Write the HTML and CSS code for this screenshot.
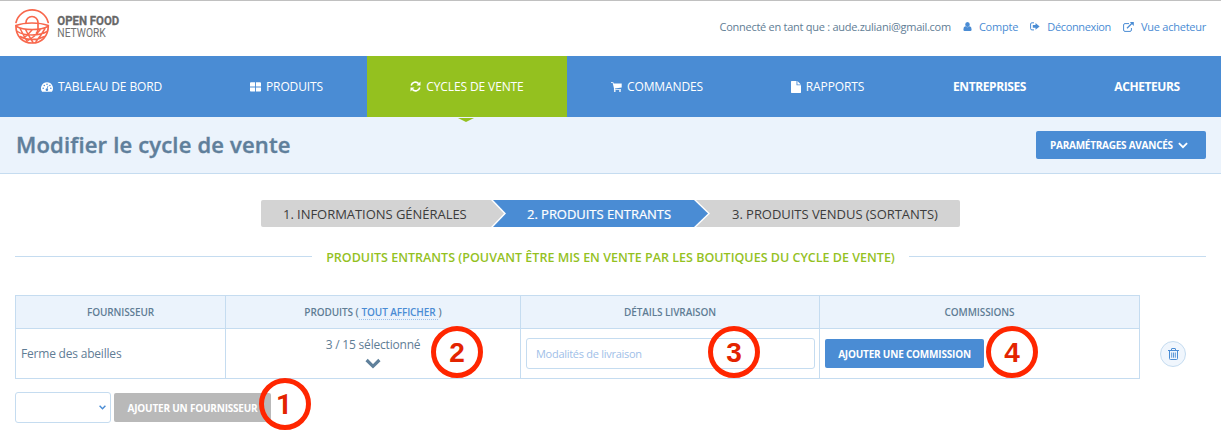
FILE: index.html
```html
<!DOCTYPE html>
<html lang="fr">
<head>
<meta charset="utf-8">
<title>Modifier le cycle de vente</title>
<link rel="stylesheet" href="styles.css">
</head>
<body>
<header class="top">
  <svg class="logo" width="120" height="40" viewBox="0 0 120 40">
    <g fill="none" stroke="#f8684d" stroke-width="1.500" stroke-linecap="round">
      <path d="M1 14.500A16.600 16.600 0 0 1 33.200 14.500" stroke-width="1.700"/>
      <path d="M.9 17.500C7 15.200 12 15 17 15S27 15.200 33.300 17.500C33.300 29 26 35 17.200 35C8 35 .9 29 .9 17.500Z" stroke-width="1.700"/>
      <path d="M11 15V14.500A6 6 0 0 1 23 14.500V21.500Q23 23.500 21.500 25" stroke-width="1.700"/>
      <path d="M1.500 18.500C8 22.500 26 22.500 32.800 18.500M2.500 23.500C9 28 25 28 32 23.500M5 28.500C12 32.500 22 32.500 29.500 28.500M5 20.500L8 26L12 33.500M10.500 21.500L14 28L18 34.500M30 20.500L26 27L21 33.500M25 22L19.500 28L13 32.500M17 22L12 27.500L8 30"/>
    </g>
    <text x="42.300" y="17" class="logo-bold" textLength="62" lengthAdjust="spacingAndGlyphs">OPEN FOOD</text>
    <text x="42.300" y="28.500" class="logo-light" textLength="48.500" lengthAdjust="spacingAndGlyphs">NETWORK</text>
  </svg>
  <div class="account">
    <span class="who">Connecté en tant que : aude.zuliani@gmail.com</span>
    <a class="acc"><svg width="9" height="9" viewBox="0 0 9 9"><path d="M4.500 0A2.300 2.500 0 0 1 4.500 5A2.300 2.500 0 0 1 4.500 0M2.200 4.200Q4.500 6.300 6.800 4.200Q8.600 4.600 8.600 7.500Q8.600 9 7.400 9H1.600Q.4 9 .4 7.500Q.4 4.600 2.200 4.200" fill="#4a8cd4"/></svg><span class="t-compte">Compte</span></a>
    <a class="acc"><svg width="10" height="9" viewBox="0 0 10 9"><path d="M4 .8H2Q.6 .8 .6 2V6.600Q.6 7.900 2 7.900H4" fill="none" stroke="#4a8cd4"/><path d="M2.800 3H5.500V1L9.600 4.400L5.500 7.800V5.800H2.800Z" fill="#4a8cd4"/></svg><span class="t-deco">Déconnexion</span></a>
    <a class="acc"><svg width="11" height="10" viewBox="0 0 11 10"><path d="M6 1.600H2Q.6 1.600 .6 3V8Q.6 9.400 2 9.400H7Q8.400 9.400 8.400 8V6" fill="none" stroke="#4a8cd4"/><path d="M4 6.300L9 1.300" stroke="#4a8cd4" stroke-width="1.300"/><path d="M6.800 0H10.800V4Z" fill="#4a8cd4"/></svg><span class="t-vue">Vue acheteur</span></a>
  </div>
</header>
<nav class="nav">
  <a class="tab w1"><svg width="12" height="10" viewBox="0 0 12 10"><path d="M6 .3A6 6 0 0 0 1.100 9.700H10.900A6 6 0 0 0 6 .3" fill="#fff"/><g fill="#4a8cd4"><circle cx="2.200" cy="6.200" r=".8"/><circle cx="3.300" cy="3.500" r=".8"/><circle cx="6" cy="2.300" r=".8"/><circle cx="9.800" cy="6.200" r=".8"/><circle cx="8.900" cy="3.500" r=".8"/><circle cx="5.900" cy="7.700" r="1.300"/></g><path d="M5.900 7.500L7 3.800" stroke="#4a8cd4" stroke-width=".8"/></svg><span>TABLEAU DE BORD</span></a>
  <a class="tab w2"><svg width="11" height="10" viewBox="0 0 11 10"><path d="M.6 .3H5.100V4.500H0V.9ZM6 .3H10.400L11 .9V4.500H6ZM0 5.400H5.100V9.600H.6L0 9ZM6 5.400H11V9L10.400 9.600H6Z" fill="#fff"/></svg><span>PRODUITS</span></a>
  <a class="tab w3 active"><svg width="11" height="11" viewBox="0 0 11 11"><path d="M1.200 4.500A4.300 4.300 0 0 1 8.600 2.600M9.800 6.500A4.300 4.300 0 0 1 2.400 8.400" fill="none" stroke="#fff" stroke-width="1.600"/><path d="M10.500 .6V4.600H6.500ZM.5 10.400V6.400H4.500Z" fill="#fff"/></svg><span>CYCLES DE VENTE</span></a>
  <a class="tab w4"><svg width="11" height="10" viewBox="0 0 11 10"><path d="M0 .2H2.300L2.700 1.500H10.700V5.600L3.900 6.400V7.200H10V8H2.900L3 6.400L1.700 1.100H0Z" fill="#fff"/><circle cx="3.800" cy="9" r=".9" fill="#fff"/><circle cx="9" cy="9" r=".9" fill="#fff"/></svg><span>COMMANDES</span></a>
  <a class="tab w5"><svg width="10" height="12" viewBox="0 0 10 12"><path d="M.5 0H5.500V4.300H10V11.500L9.500 12H.5L0 11.500V.5ZM6.400 .1L9.900 3.500H6.400Z" fill="#fff"/></svg><span>RAPPORTS</span></a>
  <a class="tab w6 bold"><span>ENTREPRISES</span></a>
  <a class="tab w7 bold"><span>ACHETEURS</span></a>
</nav>
<section class="titlebar">
  <h1>Modifier le cycle de vente</h1>
  <button class="btn advanced"><span>PARAMÉTRAGES AVANCÉS</span><svg width="10" height="7" viewBox="0 0 10 7"><path d="M.9 1.200L5 5.200L9.100 1.200" fill="none" stroke="#fff" stroke-width="1.800"/></svg></button>
</section>
<main>
  <div class="steps">
    <div class="step s1"><span>1. INFORMATIONS GÉNÉRALES</span></div>
    <div class="step s2"><span>2. PRODUITS ENTRANTS</span></div>
    <div class="step s3"><span>3. PRODUITS VENDUS (SORTANTS)</span></div>
  </div>
  <div class="legend"><i></i><h2>PRODUITS ENTRANTS (POUVANT ÊTRE MIS EN VENTE PAR LES BOUTIQUES DU CYCLE DE VENTE)</h2><i></i></div>
  <div class="tablerow">
    <div class="grid">
      <div class="th">FOURNISSEUR</div>
      <div class="th"><span>PRODUITS (<a class="all">TOUT AFFICHER</a>)</span></div>
      <div class="th">DÉTAILS LIVRAISON</div>
      <div class="th">COMMISSIONS</div>
      <div class="td name">Ferme des abeilles</div>
      <div class="td products"><span>3 / 15 sélectionné</span><svg width="16" height="11" viewBox="0 0 16 11"><path d="M1.600 2L8 8.300L14.400 2" fill="none" stroke="#5f809b" stroke-width="3.200"/></svg></div>
      <div class="td"><input placeholder="Modalités de livraison"></div>
      <div class="td"><button class="btn commission">AJOUTER UNE COMMISSION</button></div>
    </div>
    <a class="trash"><svg width="11" height="12" viewBox="0 0 11 12"><g fill="none" stroke="#4a8cd4"><path d="M0 2.500H11M3.500 2.500V.9Q3.500 .5 4 .5H7Q7.500 .5 7.500 .9V2.500M1.500 2.500V10.500Q1.500 11.500 2.500 11.500H8.500Q9.500 11.500 9.500 10.500V2.500"/><path d="M3.700 4.500V9.700M5.500 4.500V9.700M7.300 4.500V9.700" stroke-width=".9"/></g></svg></a>
  </div>
  <div class="add">
    <div class="select"><svg width="7" height="5" viewBox="0 0 7 5"><path d="M.6 .7L3.500 3.700L6.400 .7" fill="none" stroke="#4a8cd4" stroke-width="1.400"/></svg></div>
    <button class="btn supplier">AJOUTER UN FOURNISSEUR</button>
  </div>
</main>
<div class="mark m1">1</div>
<div class="mark m2">2</div>
<div class="mark m3">3</div>
<div class="mark m4">4</div>
</body>
</html>
```

FILE: styles.css
```css
* { box-sizing: border-box; }
body { margin: 0; width: 1221px; height: 439px; overflow: hidden; position: relative; background: #fff; color: #5f7d95; font-family: "Open Sans", sans-serif; font-size: 12px; white-space: nowrap; }
svg { display: block; flex: none; }
h1, h2 { margin: 0; }
.top { height: 56px; border-top: 1px solid #c0c0c0; padding: 0 15px; display: flex; justify-content: space-between; }
.logo { margin-top: 7px; overflow: visible; }
.logo-bold { font: 700 13.5px Roboto, sans-serif; fill: #686868; stroke: #686868; stroke-width: .3px; }
.logo-light { font: 400 12.8px Roboto, sans-serif; fill: #707070; }
.account { display: flex; align-items: center; height: 51px; font-size: 11px; }
.who { margin-right: 12px; letter-spacing: -.27px; }
.acc { display: flex; align-items: center; gap: 7px; margin-right: 12px; color: #4a8cd4; }
.acc:last-child { margin-right: 0; }
.t-compte { letter-spacing: -.2px; }
.t-deco { letter-spacing: -.35px; }
.t-vue { letter-spacing: -.25px; }
.nav { height: 61px; background: #4a8cd4; display: flex; color: #fff; font-size: 12px; letter-spacing: -.12px; }
.tab { flex: none; display: flex; align-items: center; justify-content: center; gap: 5px; position: relative; }
.w1 { width: 203px; } .w2 { width: 164px; padding-left: 3px; } .w3 { width: 200px; } .w4 { width: 180px; } .w5 { width: 161px; } .w6 { width: 163px; } .w7 { width: 152px; }
.bold { font-weight: 700; letter-spacing: -.4px; }
.active { background: #94c11f; }
.active::after { content: ""; position: absolute; left: 91px; top: 62px; width: 16px; height: 4px; background: #94c11f; clip-path: polygon(0 0, 100% 0, 50% 100%); }
.titlebar { height: 57px; background: #ebf3fc; border-bottom: 1px solid #c5dcf0; padding: 0 15px; display: flex; align-items: center; justify-content: space-between; }
h1 { font-size: 22px; font-weight: 600; color: #5f7f9b; letter-spacing: .18px; -webkit-text-stroke: .4px #5f7f9b; padding: 0 0 2px 1px; }
.btn { border: 0; border-radius: 2px; background: #4a8cd4; color: #fff; font: 700 10px "Open Sans", sans-serif; letter-spacing: -.2px; padding: 0; display: flex; align-items: center; justify-content: center; }
.advanced { width: 170px; height: 28px; gap: 5px; justify-content: flex-start; padding-left: 14px; letter-spacing: -.25px; }
.steps { display: flex; width: 699px; height: 27px; margin: 26px 0 0 261px; font-size: 13px; letter-spacing: -.04px; color: #3c3c3c; }
.step { position: relative; display: flex; align-items: center; background: #d3d3d3; }
.s1 { width: 230px; padding-left: 22px; border-radius: 2px 0 0 2px; z-index: 3; }
.s2 { width: 203px; padding-left: 36px; background: #4a8cd4; color: #fff; z-index: 2; -webkit-text-stroke: .2px #fff; }
.s3 { width: 266px; padding-left: 38px; border-radius: 0 2px 2px 0; }
.s1::before, .s1::after, .s2::before, .s2::after { content: ""; position: absolute; top: 0; height: 27px; clip-path: polygon(0 0, 2px 0, 100% 50%, 2px 100%, 0 100%); background: #fff; left: 100%; width: 15px; }
.s2::before { width: 16px; }
.s1::after, .s2::after { clip-path: polygon(0 0, 100% 50%, 0 100%); background: #d3d3d3; width: 13px; }
.s2::after { background: #4a8cd4; width: 14px; }
.legend { display: flex; align-items: center; justify-content: space-between; margin: 20px 15px 0; height: 20px; }
.legend i { width: 297px; height: 1px; background: #c5dcf0; margin-bottom: 1px; }
h2 { font-size: 12.5px; font-weight: 600; color: #94c11f; letter-spacing: .01px; }
.tablerow { display: flex; margin: 28px 15px 0; }
.grid { display: grid; grid-template-columns: 210px 295px 299px 320px; grid-template-rows: 33px 50px; border: solid #c5dcf0; border-width: 1px 0 0 1px; }
.th, .td { border: solid #c5dcf0; border-width: 0 1px 1px 0; }
.th { background: #ebf3fc; font-size: 10px; font-weight: 600; letter-spacing: -.1px; display: flex; align-items: center; justify-content: center; }
.all { color: #4a8cd4; border-bottom: 1px dotted #9cc0e8; padding: 0 2px 0 3px; margin-right: 1px; }
.td { display: flex; align-items: center; padding: 0 5px; }
.name { letter-spacing: -.2px; }
.products { flex-direction: column; padding-top: 7px; line-height: 17px; letter-spacing: -.2px; }
.products svg { margin-top: 5px; }
input { flex: none; width: 289px; height: 31px; border: 1px solid #c5dcf0; border-radius: 3px; padding: 0 9px; font: 11px "Open Sans", sans-serif; letter-spacing: -.28px; }
input::placeholder { color: #a0c0e8; opacity: 1; }
.commission { width: 159px; height: 29px; }
.trash { width: 26px; height: 26px; margin: 46px 0 0 20px; border: 1px solid #c5dcf0; border-radius: 50%; background: #f0f6fd; display: flex; align-items: center; justify-content: center; }
.add { display: flex; align-items: center; gap: 3px; margin: 13px 15px 0; }
.select { width: 96px; height: 31px; border: 1px solid #c5dcf0; border-radius: 3px; display: flex; align-items: center; justify-content: flex-end; padding-right: 4px; }
.supplier { width: 157px; height: 29px; background: #b9b9b9; }
.mark { position: absolute; width: 52px; height: 52px; border: 5px solid #ff2600; border-radius: 50%; color: #e32400; font: 700 28px/43px "Liberation Sans", sans-serif; text-align: center; z-index: 5; }
.m1 { left: 259px; top: 378px; font-family: Roboto, sans-serif; padding-right: 2px; } .m2 { left: 431px; top: 326px; } .m3 { left: 708px; top: 326px; } .m4 { left: 986px; top: 326px; }
```
